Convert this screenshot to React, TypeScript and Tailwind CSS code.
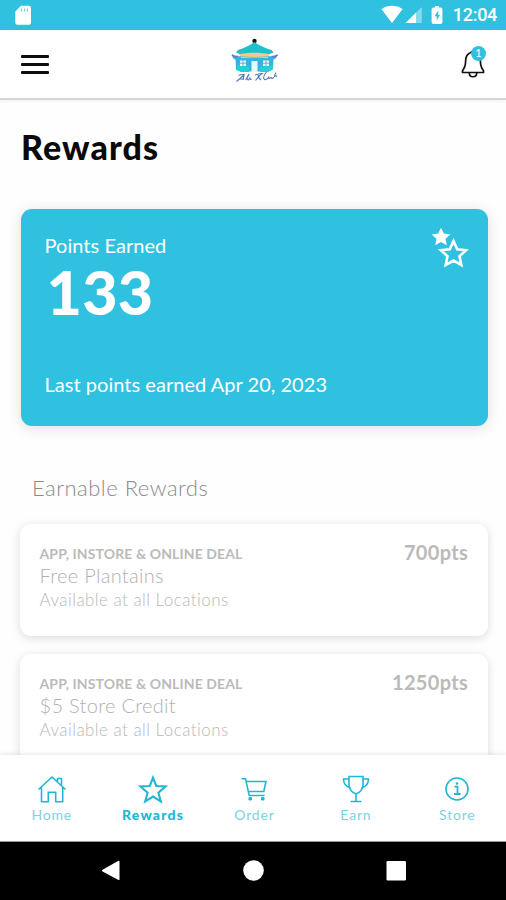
import type { ReactNode } from "react";
import clsx from "clsx";

const rewards = [
  { id: 1, points: 700, title: "Free Plantains" },
  { id: 2, points: 1250, title: "$5 Store Credit" },
];

function StatusBar() {
  return (
    <div className="flex h-[30px] shrink-0 items-center bg-[#31c1e0] text-white">
      <svg className="ml-[14px]" width="18" height="20" viewBox="0 0 18 20" fill="currentColor">
        <path d="M7 0.7h8a2 2 0 0 1 2 2v15a2 2 0 0 1-2 2H3.300a2 2 0 0 1-2-2V6.500z" />
        <path d="M7.500 3.500v3M10.500 3.500v3M13.300 3.500v3" stroke="#31c1e0" strokeWidth="1.200" opacity="0.7" />
      </svg>
      <svg className="ml-auto" width="64" height="20" viewBox="0 0 64 20" fill="currentColor">
        <path d="M0.500 4.200C3.800 1.600 7.300.8 11 .8s7.300.8 10.500 3.400L11 18z" />
        <path d="M24.500 18 40.800 2v16z" opacity="0.4" />
        <path d="M24.500 18 35 7.700V18z" />
        <path d="M54 2.500V1h4v1.500h1.600a1.800 1.800 0 0 1 1.800 1.800v12.900a1.800 1.800 0 0 1-1.800 1.800h-7.200a1.800 1.800 0 0 1-1.800-1.800V4.300a1.800 1.800 0 0 1 1.800-1.800z" />
        <path d="M57.300 5.500 53.500 11.300h2.200v4.500L59 9.800h-2z" fill="#31c1e0" />
      </svg>
      <span className="mr-[9px] ml-[8px] font-[Roboto] text-[18px] leading-[30px] font-medium tracking-[-0.3px]">
        12:04
      </span>
    </div>
  );
}

function Logo() {
  return (
    <svg width="50" height="50" viewBox="0 0 50 50" fill="none">
      <circle cx="24.500" cy="4" r="2.200" fill="#111" />
      <path d="M24.500 5C20 8.500 14 11 8 13L6 15.500l4 1.800h29l4.500-1.800-2-2.500C35 11 29 8.500 24.500 5z" fill="#20bfc9" />
      <path d="M9 17.200c9-2 22-2 31 0l-2 3H11z" fill="#f3c987" />
      <path d="M2 17.500c2 1.500 4 2 7 1.700h31.500c3 .3 5-.2 7-1.700-.5 3-2 4.500-4 5L43 32l-5 2.500H11L6 32l-.5-9.500c-2-.5-3-2-3.500-5z" fill="#35b4e0" />
      <path d="M7 28l12 2v5h-8l-5-2zM30 30l13-2v4.500l-5 2.500h-8z" fill="#25cfd8" />
      <path d="M11 20.500c8-1 19-1 27 0" stroke="#f3c987" strokeWidth="1.500" />
      <path d="M2 17.800c2 2 4 2 6 1.500M47.500 17.800c-2 2-4 2-6 1.500" stroke="#6879c7" strokeWidth="1.700" />
      <path d="M10 23.500h6v5.500h-6zM33 23.500h6v5.500h-6zM21.500 24h6v11.500h-6z" fill="#e7fafc" />
      <path d="M13 23.500v5.500M36 23.500v5.500M10 26.200h6M33 26.200h6" stroke="#4a9ddb" strokeWidth=".8" />
      <path d="M6.500 44.500 14 38l-1 5M8.500 38.500c2-1 4-1.200 6-1M9.500 42h4.500M15.500 43c1.500-2 3-4 3.500-6-1.500 2-2.500 4-1.500 5.500s1.500-1 2.500-1.500c0 1.500.5 2 1.500 1" stroke="#527bb9" strokeWidth="1.100" />
      <path d="M25 38c2.500-1 5-1.500 7-1.500-2 1.500-4.500 4.500-6.500 7M28 37.500c0 2 1.500 4.500 3 5.500M36.500 35c-2 2.500-3.500 5.500-2.500 7s3 .5 4.500-1.500c0 1 .5 1.500 1.500.5s1-1 1.500 0 1.500.5 2-1M46 35.500c-1 1.500-1.500 3-1.500 4.500M46.500 38c-1 .5-1 1.500.5 2" stroke="#527bb9" strokeWidth="1.100" />
    </svg>
  );
}

function Header() {
  return (
    <header className="z-10 flex h-[70px] shrink-0 items-center justify-between border-b-2 border-[#d4d4d4] bg-white pr-[18px] pl-[21px] shadow-[0_1px_4px_rgba(0,0,0,0.06)]">
      <div className="flex w-7 flex-col gap-[5px]">
        <div className="h-[3px] rounded-[1px] bg-[#0c0c0c]" />
        <div className="h-[3px] rounded-[1px] bg-[#0c0c0c]" />
        <div className="h-[3px] rounded-[1px] bg-[#0c0c0c]" />
      </div>
      <div className="mb-[5px] ml-[3px]">
        <Logo />
      </div>
      <div className="relative mb-[7px] h-[36px] w-[30px]">
        <svg width="30" height="36" viewBox="0 0 30 36" fill="none" stroke="#111" strokeWidth="1.700" strokeLinejoin="round">
          <path d="M12.500 9.800a3 3 0 0 1 5 0M12.500 9.800C8.500 11.300 7.600 14.500 7.600 18c0 5-1 7-3.100 9.700V29.500h21v-1.800c-2.100-2.700-3.100-4.700-3.100-9.700 0-3.500-.9-6.700-4.900-8.200" />
          <path d="M11.300 30c0 5 7.400 5 7.400 0" />
        </svg>
        <span className="absolute top-[3px] left-[13px] flex size-[15px] items-center justify-center rounded-full bg-[#31c1e0] font-[Lato] text-[11px] text-white">
          1
        </span>
      </div>
    </header>
  );
}

function PointsCard() {
  return (
    <section className="relative mt-[42px] mr-[18.500px] ml-[20.500px] h-[217px] rounded-[11px] bg-[#31c1e0] px-6 pt-[25px] text-white shadow-[0_2px_14px_rgba(0,0,0,0.13)]">
      <p className="-mt-px text-[20px] leading-6 tracking-[0.05px]">Points Earned</p>
      <p className="mt-[5px] ml-[2px] text-[61px] leading-[60px] font-black tracking-[0.3px]">133</p>
      <p className="mt-[50px] text-[20px] leading-6 tracking-[0.03px]">Last points earned Apr 20, 2023</p>
      <svg className="absolute top-[18px] right-[19px]" width="38" height="42" viewBox="0 0 38 42" fill="none">
        <path d="M10 .8 12.800 6.600l6.500.8-4.800 4.400 1.300 6.400L10 15.100l-5.800 3.100 1.300-6.400L.7 7.400l6.500-.8z" fill="#fff" />
        <path d="M22.500 14 26.200 22.200l8.900 1-6.600 6 1.800 8.800-7.800-4.400-7.800 4.400 1.800-8.800-6.600-6 8.900-1z" stroke="#fff" strokeWidth="2.600" />
      </svg>
    </section>
  );
}

function RewardCard({ title, points }: { title: string; points: number }) {
  return (
    <article className="flex h-[112px] shrink-0 justify-between rounded-[11px] bg-white pt-[21px] pr-[19.500px] pl-[19.500px] shadow-[0_2px_10px_rgba(0,0,0,0.14)]">
      <div>
        <p className="text-[14px] leading-[18px] font-bold tracking-[0.12px] text-[#bababa]">
          APP, INSTORE &amp; ONLINE DEAL
        </p>
        <p className="text-[20px] leading-6 font-light tracking-[0.3px] text-[#b0b0b0]">{title}</p>
        <p className="mt-[2px] text-[17px] leading-[22px] font-light tracking-[0.45px] text-[#b8b8b8]">
          Available at all Locations
        </p>
      </div>
      <p className="-mt-[5px] text-[20px] leading-[24px] font-bold tracking-[0.3px] text-[#bababa]">{points}pts</p>
    </article>
  );
}

function Tab({ label, active, children }: { label: string; active?: boolean; children: ReactNode }) {
  return (
    <button className="flex w-[101.400px] shrink-0 flex-col items-center pt-[19px] text-[#20b6d6]">
      <svg width="30" height="30" viewBox="0 0 30 30" fill="none" stroke="currentColor" strokeWidth="1.600">
        {children}
      </svg>
      <span
        className={clsx(
          "mt-[2px] text-[14px] leading-[18px]",
          active ? "font-black tracking-[1.2px]" : "tracking-[0.8px] text-[#7fd0e2]"
        )}
      >
        {label}
      </span>
    </button>
  );
}

function TabBar() {
  return (
    <nav className="z-10 flex h-[87px] shrink-0 border-b border-[#999] bg-white pl-px shadow-[0_-1px_4px_rgba(0,0,0,0.1)]">
      <Tab label="Home">
        <path
          d="M1.500 15.500 15 3l13.500 12.500M4.500 13.500V27.700h6.800v-9.500h7.400v9.500h7V13.500M20.500 7.500V4.500h4v6.500"
          strokeLinejoin="round"
        />
      </Tab>
      <Tab label="Rewards" active>
        <path
          d="M15 3.700 18.200 12l9.400.5-7.200 6.200 2.400 8.800L15 22.600l-7.800 4.900 2.400-8.800-7.200-6.200 9.400-.5z"
          strokeWidth="2.100"
        />
      </Tab>
      <Tab label="Order">
        <path d="M2.500 4.700h4L10.200 21.500h15.300M7.300 7.500h19.700L24.800 17.500H9.500" />
        <rect x="9.500" y="23" width="3.500" height="3.500" rx="1.200" fill="currentColor" stroke="none" />
        <rect x="22" y="23" width="3.500" height="3.500" rx="1.200" fill="currentColor" stroke="none" />
      </Tab>
      <Tab label="Earn">
        <path d="M8 2.500h14v8c0 5-3.500 8-7 9.500-3.500-1.500-7-4.500-7-9.500zM15 20v7.500M9.500 27.500h11M8 5H2.500c0 5 2 7.500 7 9M22 5h5.500c0 5-2 7.500-7 9" />
      </Tab>
      <Tab label="Store">
        <circle cx="15" cy="15" r="11" />
        <path d="M12.500 12.700h3V20M12 20h6.500" strokeWidth="1.800" />
        <circle cx="15" cy="9.500" r="1.300" fill="currentColor" stroke="none" />
      </Tab>
    </nav>
  );
}

function SystemNav() {
  return (
    <div className="flex h-[58px] shrink-0 items-center bg-black">
      <svg width="506" height="24" viewBox="0 0 506 24" fill="#fff">
        <path d="M119.500 2.300v18.400a1 1 0 0 1-1 .4L102.500 12.500a1 1 0 0 1 0-1.700l16-9a1 1 0 0 1 1 .5z" />
        <circle cx="253.500" cy="11.500" r="10.300" />
        <rect x="386.500" y="2" width="19.500" height="19.500" rx="1.200" />
      </svg>
    </div>
  );
}

export default function App() {
  return (
    <div className="flex h-[900px] w-[506px] flex-col overflow-hidden bg-white font-[Lato,sans-serif]">
      <StatusBar />
      <Header />
      <main className="flex-1 overflow-hidden bg-[#fefefe]">
        <h1 className="mt-[27px] ml-[21px] text-[34px] leading-10 font-black tracking-[1.1px] text-[#0a0a0a]">
          Rewards
        </h1>
        <PointsCard />
        <h2 className="mt-[48px] ml-[32px] text-[22px] leading-7 font-light tracking-[0.5px] text-[#8a8a8a]">
          Earnable Rewards
        </h2>
        <div className="mt-[21.500px] mr-[18.500px] ml-[20px] flex flex-col gap-[18.500px]">
          {rewards.map((r) => (
            <RewardCard key={r.id} title={r.title} points={r.points} />
          ))}
        </div>
      </main>
      <TabBar />
      <SystemNav />
    </div>
  );
}
